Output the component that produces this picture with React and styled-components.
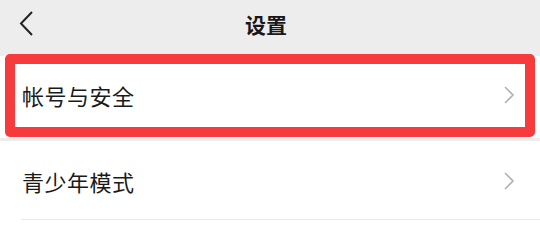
import React from "react";
import styled, { createGlobalStyle } from "styled-components";

const Global = createGlobalStyle`
  html, body {
    margin: 0;
    padding: 0;
    background: #ededed;
    font-family: "Noto Sans CJK SC", "Noto Sans", sans-serif;
  }
`;

const Page = styled.div`
  width: 540px;
  height: 225px;
  background: #ededed;
  overflow: hidden;
`;

const Header = styled.div`
  height: 56px;
  display: flex;
  align-items: center;
  justify-content: center;
  position: relative;
`;

const Back = styled.div`
  position: absolute;
  left: 18px;
  top: 10px;
  width: 18px;
  height: 28px;
  display: flex;
`;

const Title = styled.div`
  font-size: 21px;
  font-weight: 700;
  color: #181818;
  margin-top: -8px;
  margin-right: 8px;
`;

const List = styled.div`
  display: flex;
  flex-direction: column;
  gap: ${(p) => p.$gap}px;
`;

const Row = styled.div`
  position: relative;
  height: ${(p) => p.$h}px;
  background: #fff;
  display: flex;
  align-items: center;
  padding: 0 22px;
  justify-content: space-between;
`;

const Label = styled.span`
  font-size: 22px;
  color: #1a1a1a;
  letter-spacing: 0.5px;
  margin-top: ${(p) => p.$offset || 0}px;
`;

const Divider = styled.div`
  position: absolute;
  left: 21px;
  right: 0;
  bottom: 5px;
  height: 1px;
  background: #ececec;
`;

const Highlight = styled.div`
  position: absolute;
  left: 5px;
  right: 5px;
  top: -2px;
  bottom: 1px;
  border: 10px solid #f73a3b;
  border-radius: 5px;
  pointer-events: none;
`;

function Chevron({ offset }) {
  return (
    <svg width="14" height="20" viewBox="0 0 14 20" style={{ marginTop: offset, marginRight: 2 }}>
      <path d="M3 2 L11 10 L3 18" fill="none" stroke="#b3b3b3" strokeWidth="1.6" />
    </svg>
  );
}

export default function App() {
  return (
    <Page>
      <Global />
      <Header>
        <Back>
          <svg width="18" height="28" viewBox="0 0 18 28">
            <path d="M14 2 L3 13.5 L14 25" fill="none" stroke="#222" strokeWidth="2" />
          </svg>
        </Back>
        <Title>设置</Title>
      </Header>
      <List $gap={3}>
        <Row $h={82}>
          <Label $offset={-4}>帐号与安全</Label>
          <Chevron offset={-4} />
          <Highlight />
        </Row>
        <Row $h={84}>
          <Label $offset={-4}>青少年模式</Label>
          <Chevron offset={-4} />
          <Divider />
        </Row>
      </List>
    </Page>
  );
}
